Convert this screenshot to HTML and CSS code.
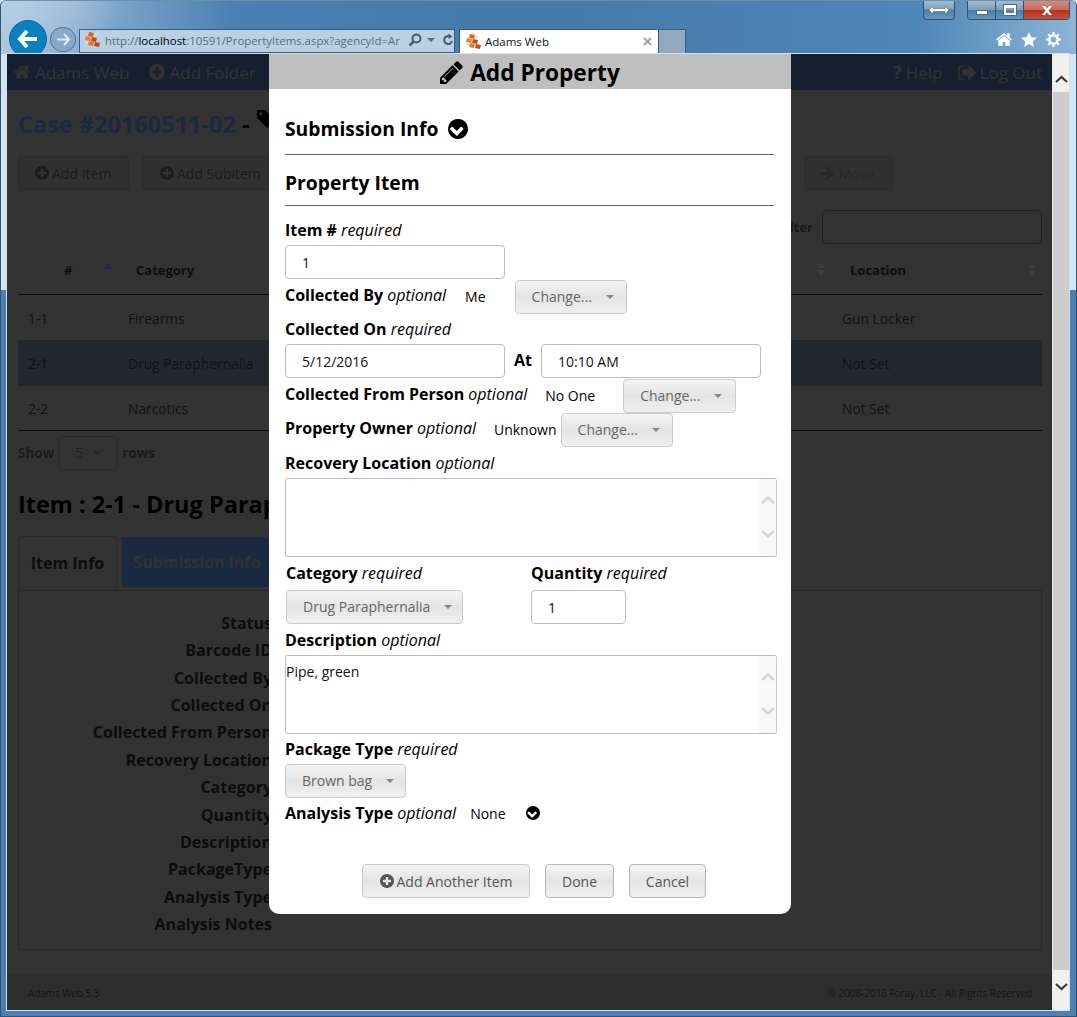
FILE: index.html
```html
<!DOCTYPE html>
<html lang="en">
<head>
<meta charset="utf-8">
<title>Adams Web</title>
<link rel="stylesheet" href="styles.css">
</head>
<body>
<svg class="defs" width="0" height="0" aria-hidden="true">
  <symbol id="i-plus" viewBox="128 128 1536 1536"><path d="M1344 960v-128q0-26-19-45t-45-19h-256v-256q0-26-19-45t-45-19h-128q-26 0-45 19t-19 45v256h-256q-26 0-45 19t-19 45v128q0 26 19 45t45 19h256v256q0 26 19 45t45 19h128q26 0 45-19t19-45v-256h256q26 0 45-19t19-45zm320-64q0 209-103 385.500t-279.500 279.500-385.500 103-385.500-103-279.500-279.500-103-385.500 103-385.500 279.500-279.500 385.500-103 385.500 103 279.500 279.500 103 385.500z"/></symbol>
  <symbol id="i-chev" viewBox="128 128 1536 1536"><path d="M845 1395l454-454q19-19 19-45t-19-45l-102-102q-19-19-45-19t-45 19l-307 307-307-307q-19-19-45-19t-45 19l-102 102q-19 19-19 45t19 45l454 454q19 19 45 19t45-19zm819-499q0 209-103 385.500t-279.500 279.500-385.500 103-385.500-103-279.500-279.500-103-385.500 103-385.500 279.500-279.500 385.500-103 385.500 103 279.500 279.500 103 385.500z"/></symbol>
  <symbol id="i-pencil" viewBox="128 128 1536 1536"><path d="M491 1536l91-91-235-235-91 91v107h128v128h107zm523-928q0-22-22-22-10 0-17 7l-542 542q-7 7-7 17 0 22 22 22 10 0 17-7l542-542q7-7 7-17zm-54-192l416 416-832 832h-416v-416zm683 96q0 53-37 90l-166 166-416-416 166-165q36-38 90-38 53 0 91 38l235 234q37 39 37 91z"/></symbol>
  <symbol id="i-home" viewBox="90 200 1612 1380"><path d="M1472 992v480q0 26-19 45t-45 19h-384v-384h-256v384h-384q-26 0-45-19t-19-45v-480q0-1 .5-3t.5-3l575-474 575 474q1 2 1 6zm223-69l-62 74q-8 9-21 11h-3q-13 0-21-7l-692-577-692 577q-12 8-24 7-13-2-21-11l-62-74q-8-10-7-23.500t11-21.500l719-599q32-26 76-26t76 26l244 204v-195q0-14 9-23t23-9h192q14 0 23 9t9 23v408l219 182q10 8 11 21.500t-7 23.500z"/></symbol>
  <symbol id="i-out" viewBox="64 256 1568 1280"><path d="M704 1440q0 4 1 20t.5 26.500-3 23.500-10 19.500-20.500 6.500h-320q-119 0-203.500-84.500t-84.500-203.500v-704q0-119 84.500-203.500t203.500-84.500h320q13 0 22.500 9.500t9.500 22.500q0 4 1 20t.5 26.500-3 23.500-10 19.500-20.500 6.500h-320q-66 0-113 47t-47 113v704q0 66 47 113t113 47h288 11 13t11.500 1 11.500 3 8 5.500 7 9 2 13.500zm928-544q0 26-19 45l-544 544q-19 19-45 19t-45-19-19-45v-288h-448q-26 0-45-19t-19-45v-384q0-26 19-45t45-19h448v-288q0-26 19-45t45-19 45 19l544 544q19 19 19 45z"/></symbol>
  <symbol id="i-right" viewBox="128 190 1472 1412"><path d="M1600 960q0 54-37 91l-651 651q-39 37-91 37-51 0-90-37l-75-75q-38-38-38-91t38-91l293-293h-704q-52 0-84.500-37.500t-32.500-90.500v-128q0-53 32.500-90.500t84.500-37.500h704l-293-294q-38-36-38-90t38-90l75-75q38-38 90-38 53 0 91 38l651 651q37 35 37 90z" transform="translate(0 -64)"/></symbol>
  <symbol id="i-tag" viewBox="128 128 1536 1536"><path d="M576 448q0-53-37.500-90.500t-90.500-37.500-90.500 37.500-37.500 90.500 37.500 90.500 90.500 37.500 90.500-37.500 37.500-90.500zm1067 576q0 53-37 90l-491 492q-39 37-91 37-53 0-90-37l-715-716q-38-37-64.500-101t-26.500-117v-416q0-52 38-90t90-38h416q53 0 117 26.500t102 64.500l715 714q37 39 37 91z"/></symbol>
  <symbol id="i-bricks" viewBox="0 0 16 16">
    <path d="M4 0l5 1-1 4-5-1z" fill="#d9651e"/><path d="M1 4l5 1-1 4-5-1z" fill="#e38a3a"/><path d="M7 5l5 1-1 4-5-1z" fill="#c9481a"/><path d="M4 9l5 1-1 4-5-1z" fill="#e07a2a"/><path d="M10 10l5 1-1 4-5-1z" fill="#c9481a"/><path d="M9 1.500l3 .6-.5 2.500-3-.6z" fill="#f0d8bc"/><path d="M0 9l3 .6-.5 2.500-2.500-.6z" fill="#f0d8bc"/>
  </symbol>
</svg>

<header class="chrome">
  <div class="caption">
    <div class="cap-btn cap-snap"><svg width="22" height="10" viewBox="0 0 22 10"><path d="M1 5l4-4v2.500h12V1l4 4-4 4V6.500H5V9z" fill="#fff" stroke="#46688a" stroke-width=".6"/></svg></div>
    <div class="cap-group">
      <div class="cap-btn cap-min"><span class="min-glyph"></span></div>
      <div class="cap-btn cap-max"><span class="max-glyph"></span></div>
      <div class="cap-btn cap-close"><svg width="14" height="11" viewBox="0 0 14 11"><path d="M2 1h3l2 2.500L9 1h3L8.500 5.500 12 10H9L7 7.500 5 10H2l3.500-4.500z" fill="#fff"/></svg></div>
    </div>
  </div>
  <div class="toolbar">
    <button class="nav-back" type="button" aria-label="Back"><svg width="22" height="20" viewBox="0 0 22 20"><path d="M10 2L3 10l7 8M3 10h17" fill="none" stroke="#fff" stroke-width="4"/></svg></button>
    <button class="nav-fwd" type="button" aria-label="Forward"><svg width="15" height="13" viewBox="0 0 15 13"><path d="M8 1l5 5.500-5 5.500M13 6.500H1" fill="none" stroke="#dfe9f2" stroke-width="2"/></svg></button>
    <div class="address">
      <svg class="fav" width="16" height="16"><use href="#i-bricks"/></svg>
      <span class="url">http://<b>localhost</b>:10591/PropertyItems.aspx?agencyId=Ar</span>
      <svg class="addr-ico" width="14" height="14" viewBox="0 0 14 14"><circle cx="8.500" cy="5.500" r="4" fill="none" stroke="#4b5b6a" stroke-width="2"/><path d="M5.500 8.500L1.500 12.500" stroke="#4b5b6a" stroke-width="2.500"/></svg>
      <span class="addr-caret"></span>
      <svg class="addr-ico" width="12" height="14" viewBox="0 0 12 14"><path d="M10 8a4 4 0 1 1-2-4.500" fill="none" stroke="#4b5b6a" stroke-width="2"/><path d="M6.500 0.500l4 3-4 2.500z" fill="#4b5b6a"/></svg>
    </div>
    <div class="tab">
      <svg class="fav" width="16" height="16"><use href="#i-bricks"/></svg>
      <span class="tab-title">Adams Web</span>
      <svg class="tab-x" width="9" height="9" viewBox="0 0 9 9"><path d="M1 1l7 7M8 1L1 8" stroke="#a3a3a3" stroke-width="2"/></svg>
    </div>
    <div class="tab-new"></div>
    <div class="tools">
      <svg class="ico-white" width="16" height="15"><use href="#i-home"/></svg>
      <svg width="16" height="15" viewBox="0 0 16 15"><path d="M8 0l2.300 5.200 5.700.5-4.300 3.700 1.300 5.600L8 12l-5 3 1.300-5.600L0 5.700l5.700-.5z" fill="#fff"/></svg>
      <svg width="15" height="15" viewBox="0 0 15 15"><circle cx="7.500" cy="7.500" r="4.200" fill="none" stroke="#fff" stroke-width="2.400"/><path d="M7.500 0v3M7.500 12v3M0 7.500h3M12 7.500h3M2.200 2.200l2 2M10.800 10.800l2 2M12.800 2.200l-2 2M4.200 10.800l-2 2" stroke="#fff" stroke-width="2.200"/></svg>
    </div>
  </div>
</header>

<div class="viewport">
  <main class="page">
    <nav class="navbar">
      <a class="nav-link"><svg class="ni" width="16" height="14"><use href="#i-home"/></svg>Adams Web</a>
      <a class="nav-link"><svg class="ni" width="16" height="16"><use href="#i-plus"/></svg>Add Folder</a>
      <span class="nav-space"></span>
      <a class="nav-link nav-r"><b class="q">?</b>Help</a>
      <a class="nav-link nav-r"><svg class="ni" width="18" height="15"><use href="#i-out"/></svg>Log Out</a>
    </nav>
    <div class="content">
      <h1 class="case"><span class="case-no">Case #20160511-02</span> - <svg class="tag" width="18" height="18"><use href="#i-tag"/></svg></h1>
      <div class="actions">
        <button class="pbtn b-add" type="button"><svg width="14" height="14"><use href="#i-plus"/></svg> Add Item</button>
        <button class="pbtn b-sub" type="button"><svg width="14" height="14"><use href="#i-plus"/></svg> Add Subitem</button>
        <span class="nav-space"></span>
        <button class="pbtn b-move" type="button"><svg width="14" height="13"><use href="#i-right"/></svg> Move</button>
      </div>
      <div class="filter"><b>Filter</b><span class="filter-box"></span></div>
      <div class="thead">
        <b class="c-num">#</b><span class="sort-up"></span><b class="c-cat">Category</b><span class="nav-space"></span><span class="sort"></span><b class="c-loc">Location</b><span class="sort sort-end"></span>
      </div>
      <div class="trow"><span class="d-num">1-1</span><span class="d-cat">Firearms</span><span class="d-loc">Gun Locker</span></div>
      <div class="trow sel"><span class="d-num">2-1</span><span class="d-cat">Drug Paraphernalia</span><span class="d-loc">Not Set</span></div>
      <div class="trow last"><span class="d-num">2-2</span><span class="d-cat">Narcotics</span><span class="d-loc">Not Set</span></div>
      <div class="show"><b>Show</b><span class="show-box">5<i class="caret dark"></i></span><b>rows</b></div>
      <h2 class="item-h">Item : 2-1 - Drug Paraphernalia</h2>
      <div class="ptabs"><span class="ptab on">Item Info</span><span class="ptab off">Submission Info</span></div>
      <dl class="panel">
        <dt>Status</dt><dt>Barcode ID</dt><dt>Collected By</dt><dt>Collected On</dt><dt>Collected From Person</dt><dt>Recovery Location</dt><dt>Category</dt><dt>Quantity</dt><dt>Description</dt><dt>PackageType</dt><dt>Analysis Type</dt><dt>Analysis Notes</dt>
      </dl>
    </div>
    <footer class="pfoot"><span>Adams Web 5.3</span><span>© 2008-2016 Foray, LLC - All Rights Reserved</span></footer>
  </main>
  <div class="vscroll">
    <span class="vs-end vs-up"><svg width="13" height="8" viewBox="0 0 13 8"><path d="M1 7l5.500-5L12 7" fill="none" stroke="#3c3c3c" stroke-width="2.200"/></svg></span>
    <span class="vs-track"></span>
    <span class="vs-end vs-down"><svg width="13" height="8" viewBox="0 0 13 8"><path d="M1 1l5.500 5L12 1" fill="none" stroke="#3c3c3c" stroke-width="2.200"/></svg></span>
  </div>
  <section class="modal">
    <h3 class="m-head"><svg width="23" height="23"><use href="#i-pencil"/></svg> Add Property</h3>
    <form class="m-body">
      <div class="sec sec-first">Submission Info <svg class="sec-chev" width="20" height="20"><use href="#i-chev"/></svg></div>
      <hr class="rule rule-a">
      <div class="sec sec-second">Property Item</div>
      <hr class="rule rule-b">
      <label class="lbl l-13">Item # <i>required</i></label>
      <input class="inp w220 m4" value="1">
      <div class="row m1"><span class="lbl">Collected By <i>optional</i></span><span class="val wide me">Me</span><button class="dd w112" type="button">Change...<i class="caret"></i></button></div>
      <label class="lbl l-4">Collected On <i>required</i></label>
      <div class="row m4"><input class="inp w220" value="5/12/2016"><b class="at">At</b><input class="inp w220" value="10:10 AM"></div>
      <div class="row m1"><span class="lbl">Collected From Person <i>optional</i></span><span class="val wide">No One</span><button class="dd w113" type="button">Change...<i class="caret"></i></button></div>
      <div class="row"><span class="lbl">Property Owner <i>optional</i></span><span class="val narrow">Unknown</span><button class="dd w112" type="button">Change...<i class="caret"></i></button></div>
      <label class="lbl l-5">Recovery Location <i>optional</i></label>
      <div class="area m4"><textarea class="ta"></textarea><span class="ascroll"><svg width="14" height="8" viewBox="0 0 14 8"><path d="M1 7l6-5.500L13 7" fill="none" stroke="#d4d4d4" stroke-width="2.400"/></svg><svg width="14" height="8" viewBox="0 0 14 8"><path d="M1 1l6 5.500L13 1" fill="none" stroke="#d4d4d4" stroke-width="2.400"/></svg></span></div>
      <div class="cols l-5">
        <div class="col-cat"><span class="lbl">Category <i>required</i></span><button class="dd w177 m6" type="button">Drug Paraphernalia<i class="caret"></i></button></div>
        <div class="col-qty"><span class="lbl">Quantity <i>required</i></span><input class="inp w95 m6" value="1"></div>
      </div>
      <label class="lbl l-5">Description <i>optional</i></label>
      <div class="area m4"><textarea class="ta">Pipe, green</textarea><span class="ascroll"><svg width="14" height="8" viewBox="0 0 14 8"><path d="M1 7l6-5.500L13 7" fill="none" stroke="#d4d4d4" stroke-width="2.400"/></svg><svg width="14" height="8" viewBox="0 0 14 8"><path d="M1 1l6 5.500L13 1" fill="none" stroke="#d4d4d4" stroke-width="2.400"/></svg></span></div>
      <label class="lbl l-4">Package Type <i>required</i></label>
      <button class="dd w121 m4" type="button">Brown bag<i class="caret"></i></button>
      <div class="row-plain l-4"><span class="lbl">Analysis Type <i>optional</i></span><span class="val">None</span><svg class="an-chev" width="14" height="14"><use href="#i-chev"/></svg></div>
      <div class="m-foot">
        <button class="fbtn f-add" type="button"><svg width="14" height="14"><use href="#i-plus"/></svg> Add Another Item</button>
        <button class="fbtn f-done" type="button">Done</button>
        <button class="fbtn f-cancel" type="button">Cancel</button>
      </div>
    </form>
  </section>
</div>
</body>
</html>
```
FILE: styles.css
```css
* { box-sizing: border-box; }
html, body { margin: 0; padding: 0; }
body {
  width: 1077px; height: 1017px; overflow: hidden;
  display: flex; flex-direction: column;
  font-family: "Open Sans", sans-serif; font-size: 14px; color: #000;
  background: linear-gradient(180deg, #d5e4f2 0, #d5e4f2 290px, #4a80b4 290px, #4a80b4 100%);
  border: 1px solid #35536d; border-top-color: #6f8ea8; border-radius: 6px 6px 0 0;
}
.defs { position: absolute; }
svg { fill: currentColor; flex: none; }

/* browser chrome */
.chrome {
  height: 54px; flex: none; display: flex; flex-direction: column;
  margin: -1px -1px 0 -1px; border-radius: 6px 6px 0 0;
  background:
    radial-gradient(ellipse 130px 60px at 0 0, #b6cfe4 0, rgba(182,207,228,0) 100%),
    linear-gradient(90deg, #a9c6df 0, #4a7fb1 22%, #4579a9 50%, #4f86b8 85%, #8eb4d5 100%);
}
.caption { height: 20px; display: flex; justify-content: flex-end; padding-right: 7px; gap: 12px; }
.cap-group { display: flex; width: 103px; border: 1px solid #30506e; border-top: 0; border-radius: 0 0 4px 4px; overflow: hidden; }
.cap-btn { height: 20px; display: flex; align-items: center; justify-content: center; }
.cap-snap { width: 32px; border: 1px solid #30506e; border-top: 0; border-radius: 0 0 4px 4px; background: linear-gradient(#a5bfd4 0, #7f9fba 48%, #4c7ca6 52%, #6b98bf 100%); }
.cap-min, .cap-max { width: 28px; background: linear-gradient(#a5bfd4 0, #7f9fba 48%, #4c7ca6 52%, #6b98bf 100%); border-right: 1px solid #30506e; }
.cap-close { flex: 1; background: linear-gradient(#d88f82 0, #c96a5a 48%, #b5331f 52%, #c9523c 100%); }
.min-glyph { width: 12px; height: 5px; margin-top: 5px; background: #fff; border: 1px solid #4b6b89; }
.max-glyph { width: 12px; height: 10px; border: 2px solid #fff; border-top-width: 3px; outline: 1px solid #4b6b89; }
.toolbar { flex: 1; display: flex; position: relative; padding-left: 9px; align-items: flex-end; }
.nav-back { width: 38px; height: 38px; margin-bottom: -2px; border-radius: 50%; border: 1px solid #1d5f91; background: #0a7fc1; padding: 0; display: flex; align-items: center; justify-content: center; }
.nav-fwd { width: 26px; height: 25px; margin: 0 3px 4px 3px; border-radius: 50%; border: 1px solid #4f7696; background: #86abca; padding: 0; display: flex; align-items: center; justify-content: center; }
.address { width: 376px; height: 24px; margin-bottom: 3px; padding: 0 0 2px 5px; display: flex; align-items: center; background: #b9d0e5; border: 1px solid #2f5f88; font-size: 11.400px; color: #5e6a75; }
.fav { margin-right: 3px; }
.url { width: 303px; white-space: nowrap; margin-left: 1px; }
.url b { font-weight: 400; color: #000; }
.addr-ico { color: #4b5b6a; margin-left: 0; }
.addr-caret { width: 0; height: 0; margin: 0 7px 0 5px; border: 4px solid transparent; border-top-color: #5b6b7a; border-bottom: 0; }
.tab { width: 200px; height: 27px; margin-left: 4px; background: #fff; border: 1px solid #2f5f88; border-bottom: 0; display: flex; align-items: center; padding: 0 0 3px 6px; font-size: 11.500px; color: #111; }
.tab-title { flex: 1; margin-left: 0; }
.tab-x { margin-right: 6px; }
.tab-new { width: 27px; height: 27px; background: #92a9bf; border: 1px solid #2f5f88; border-width: 1px 1px 0 0; }
.tools { margin-left: auto; display: flex; gap: 9px; align-items: center; height: 27px; padding: 0 16px 6px 0; color: #fff; }

/* page */
.viewport { flex: none; display: flex; position: relative; width: 1062px; height: 956px; margin: 0 0 0 6px; outline: 1px solid #cfe0ee; }
.page { width: 1045px; height: 956px; background: #333; display: flex; flex-direction: column; color: #000; }
.navbar { height: 36px; flex: none; background: #161f30; display: flex; align-items: center; padding: 0 10px 0 7px; gap: 19px; font-size: 17px; color: #333; }
.nav-link { display: flex; align-items: center; gap: 5px; white-space: nowrap; }
.nav-r { gap: 4px; }
.q { font-size: 18px; }
.nav-r + .nav-r { margin-left: -4px; }
.nav-space { flex: 1; }
.content { flex: 1; min-height: 0; padding: 0 10px 0 11px; display: flex; flex-direction: column; }
.case { margin: 18px 0 0; height: 32px; line-height: 32px; font-size: 23.500px; font-weight: 700; display: flex; gap: 6px; align-items: center; white-space: nowrap; }
.case-no { color: #1b2842; }
.tag { margin: -10px 0 0 1px; }
.actions { display: flex; margin-top: 16px; height: 34px; }
.pbtn { height: 34px; font: 14px "Open Sans", sans-serif; color: #1c1c1c; background: #313131; border: 1px solid #2b2b2b; border-radius: 4px; padding: 0 0 0 16px; display: flex; align-items: center; gap: 3px; }
.b-add { width: 111px; }
.b-sub { width: 150px; margin-left: 13px; padding-left: 17px; }
.b-move { width: 88px; margin-right: 149px; padding-left: 14px; gap: 5px; color: #282828; }
.filter { display: flex; justify-content: flex-end; align-items: center; gap: 9px; margin-top: 20px; height: 34px; color: #191919; font-size: 13px; }
.filter-box { width: 220px; height: 34px; border: 1px solid #222; border-radius: 4px; }
.thead { display: flex; align-items: center; height: 51px; padding-top: 1px; border-bottom: 1px solid #0c0c0c; font-size: 13px; color: #0d0d0d; }
.c-num { margin-left: 46px; width: 40px; }
.sort-up { width: 0; height: 0; border: 4px solid transparent; border-bottom: 6px solid #28264a; border-top: 0; margin: -8px 0 0 0; }
.c-cat { margin-left: 24px; }
.sort { width: 8px; height: 14px; flex: none; position: relative; margin-top: -1px; }
.sort::before { content: ""; position: absolute; left: 0; top: 0; border: 4px solid transparent; border-bottom: 6px solid #3e3e3e; border-top: 0; }
.sort::after { content: ""; position: absolute; left: 0; bottom: 0; border: 4px solid transparent; border-top: 6px solid #3e3e3e; border-bottom: 0; }
.c-loc { margin-left: 25px; width: 178px; }
.sort-end { margin-right: 6px; }
.trow { display: flex; align-items: center; height: 45.330px; padding-top: 2px; color: #121212; font-size: 13.800px; }
.trow.sel { background: #22272d; }
.trow.last { border-bottom: 1px solid #0c0c0c; }
.d-num { margin-left: 10px; width: 100px; }
.d-cat { flex: 1; }
.d-loc { width: 200px; }
.show { display: flex; align-items: center; gap: 3px; height: 34px; margin-top: 5px; font-size: 13.500px; color: #1a1a1a; }
.show-box { width: 60px; height: 34px; margin: 0 1px; border: 1px solid #2a2a2a; border-radius: 4px; display: flex; align-items: center; padding-left: 16px; color: #222; font-size: 14px; }
.caret { display: inline-block; width: 0; height: 0; border: 4px solid transparent; border-top-color: #888; border-bottom: 0; margin-left: 10px; }
.caret.dark { border-top-color: #272727; }
.item-h { margin: 17px 0 0; height: 34px; line-height: 34px; font-size: 23.500px; font-weight: 700; white-space: nowrap; color: #000; }
.ptabs { display: flex; margin-top: 15px; height: 54px; font-size: 16px; font-weight: 700; }
.ptab { display: flex; align-items: center; justify-content: center; }
.ptab.on { width: 99px; height: 54px; padding-bottom: 1px; border: 1px solid #2a2a2a; border-bottom: 0; border-radius: 4px 4px 0 0; color: #0c0c0c; background: #333; position: relative; z-index: 1; }
.ptab.off { width: 150px; margin-left: 5px; height: 50px; margin-top: 1px; background: #1b2842; color: #323232; }
.panel { margin: 0; height: 360px; border: 1px solid #292929; padding: 19px 0 0; }
.panel dt { width: 253px; height: 27.360px; line-height: 27px; text-align: right; font-size: 16px; font-weight: 700; color: #0c0c0c; white-space: nowrap; }
.pfoot { height: 35px; flex: none; background: #2e2e2e; display: flex; justify-content: space-between; align-items: center; padding: 0 20px 0 21px; font-size: 9.900px; color: #151515; }
.vscroll { width: 17px; height: 956px; display: flex; flex-direction: column; background: #fff; border-left: 1px solid #e8e8e8; }
.vs-end { background: #f0f0f0; display: flex; justify-content: center; }
.vs-up { height: 38px; padding-top: 21px; }
.vs-down { height: 40px; padding-top: 13px; }
.vs-track { flex: 1; background: #cdcdcd; }

/* modal */
.modal { position: absolute; left: 262px; top: 0; width: 522px; height: 860px; background: #fff; border-radius: 0 0 10px 10px; color: #000; }
.m-head { margin: 0; height: 35px; padding-top: 1px; background: #bfbfbf; display: flex; align-items: center; justify-content: center; gap: 7px; font-size: 22.700px; font-weight: 700; }
.m-body { padding: 0 16px; display: flex; flex-direction: column; align-items: flex-start; }
.sec { font-size: 19.300px; font-weight: 700; height: 28px; line-height: 28px; display: flex; align-items: center; gap: 10px; white-space: nowrap; }
.sec-first { margin-top: 26px; }
.sec-second { margin-top: 14px; }
.rule { width: 489px; margin: 0; border: 0; border-top: 1px solid #666; }
.rule-a { margin-top: 11px; }
.rule-b { margin-top: 8px; }
.lbl { font-size: 16px; font-weight: 700; height: 22px; line-height: 22px; white-space: nowrap; display: block; }
.lbl i { font-weight: 400; }
.row .lbl { margin-top: -4px; }
.row .val { margin-top: -2px; }
.l-13 { margin-top: 13px; }
.l-4 { margin-top: 4px; }
.l-5 { margin-top: 5px; }
.m1 { margin-top: 1px; }
.m4 { margin-top: 4px; }
.m6 { margin-top: 6px; }
.inp { height: 34px; border: 1px solid #bbb; border-radius: 4px; padding: 0 16px; font: 14px "Open Sans", sans-serif; color: #111; background: #fff; display: block; }
.w220 { width: 220px; }
.w95 { width: 95px; }
.row { display: flex; align-items: center; height: 34px; }
.row-plain { display: flex; align-items: center; height: 22px; }
.val { font-size: 14px; margin-left: 18px; white-space: nowrap; }
.row-plain .val { margin-left: 14px; }
.val.wide { margin-right: 28px; }
.val.wide.me { margin: -2px 29px 0 19px; }
.val.narrow { margin-right: 4px; }
.at { font-size: 16px; margin: -2px 9px 0 9px; }
.dd, .fbtn { height: 34px; font: 14px "Open Sans", sans-serif; color: #666; border: 1px solid #ccc; border-radius: 4px; background: linear-gradient(#f4f4f4, #e4e4e4 50%, #f0f0f0); display: flex; align-items: center; white-space: nowrap; }
.dd { padding: 0 0 1px 16px; }
.w112 { width: 112px; }
.w113 { width: 113px; }
.w121 { width: 121px; }
.w177 { width: 177px; }
.dd .caret { margin-left: 14px; }
.area { width: 492px; height: 79px; border: 1px solid #bbb; border-right-color: #ccc; border-radius: 3px; display: flex; overflow: hidden; }
.ta { flex: 1; border: 0; outline: 0; resize: none; padding: 6px 0 0 0; font: 14px "Open Sans", sans-serif; color: #111; overflow: hidden; }
.ascroll { width: 17px; background: #f8f8f8; display: flex; flex-direction: column; align-items: center; justify-content: space-between; padding: 17px 0 18px; }
.cols { display: flex; margin-left: 1px; }
.col-cat { width: 245px; }
.m-foot { width: 489px; margin-top: 40px; display: flex; justify-content: center; gap: 15px; padding-left: 9px; }
.fbtn { padding: 0; color: #555; border-color: #b5b5b5; gap: 3px; justify-content: center; }
.f-add { width: 168px; border-color: #ccc; }
.f-done { width: 69px; }
.f-cancel { width: 77px; }
.an-chev { margin-left: 20px; }
```
